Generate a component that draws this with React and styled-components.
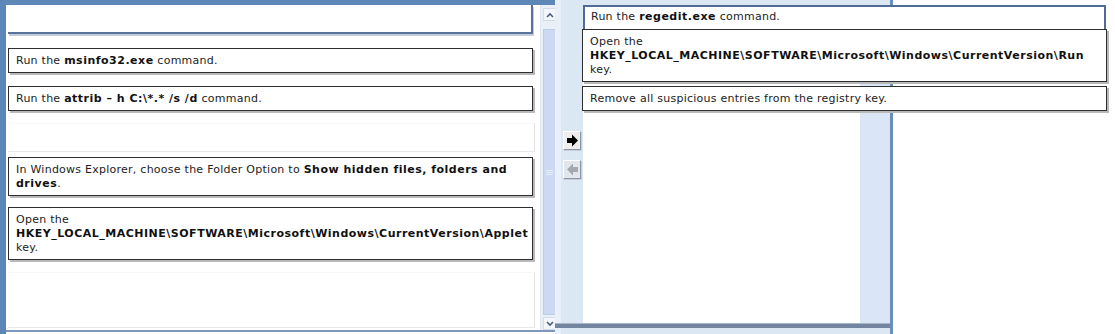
import React from "react";
import styled, { createGlobalStyle } from "styled-components";

const Global = createGlobalStyle`
  html, body { margin: 0; padding: 0; background: #ffffff; }
  body { font-family: "DejaVu Sans", Verdana, sans-serif; }
`;

const Screen = styled.div`
  width: 1115px;
  height: 334px;
  display: flex;
  overflow: hidden;
  background: #ffffff;
  font-family: "DejaVu Sans", Verdana, sans-serif;
  font-size: 11px;
  letter-spacing: 0.25px;
  color: #222;
`;

const LeftPanel = styled.div`
  width: 555px;
  height: 334px;
  flex: none;
  box-sizing: border-box;
  border-left: 6px solid #5c87b6;
  border-top: 5px solid #5c87b6;
  display: flex;
  background: #ffffff;
`;

const LeftBody = styled.div`
  display: flex;
  flex: 1;
  height: 327px;
  border-bottom: 2px solid #7f98ba;
  box-sizing: border-box;
`;

const List = styled.div`
  width: 532px;
  flex: none;
  display: flex;
  flex-direction: column;
  padding-left: 2px;
  overflow: hidden;
`;

const Item = styled.div`
  width: 525px;
  box-sizing: border-box;
  margin-top: ${(p) => p.$mt || 0}px;
  border: 1px solid #2e2e2e;
  padding: 5px 7px 4px 7px;
  line-height: 14px;
  background: #ffffff;
  box-shadow: 2px 2px 0 #b9b9b9;
  white-space: nowrap;
  b { font-weight: bold; color: #111; letter-spacing: 0.5px; }
`;

const ClippedItem = styled.div`
  width: 525px;
  height: 29px;
  box-sizing: border-box;
  border-right: 2px solid #58729b;
  border-bottom: 2px solid #58729b;
  box-shadow: 1px 2px 0 #c3cbd8;
  background: #fff;
`;

const Slot = styled.div`
  width: 527px;
  height: ${(p) => p.$h}px;
  box-sizing: border-box;
  margin-top: ${(p) => p.$mt || 0}px;
  border-right: 1px solid #e4e4e4;
  border-bottom: 1px solid #e8e8e8;
  border-top: 1px dotted #f0f0f0;
`;

const Scrollbar = styled.div`
  width: 17px;
  flex: none;
  display: flex;
  flex-direction: column;
  align-items: center;
  background: #eaf0f8;
  border-left: 1px solid #dfe6f1;
`;

const ScrollBtn = styled.div`
  width: 14px;
  height: 13px;
  margin-top: ${(p) => p.$mt || 0}px;
  display: flex;
  align-items: center;
  justify-content: center;
  background: #f3f6fb;
  border: 1px solid #d3dbe8;
  box-sizing: border-box;
  flex: none;
`;

const Thumb = styled.div`
  width: 14px;
  flex: 1;
  margin: 8px 0 2px 0;
  box-sizing: border-box;
  background: #cbdaf2;
  border: 1px solid #bccdea;
  display: flex;
  align-items: center;
  justify-content: center;
`;

const Grip = styled.div`
  width: 7px;
  height: 5px;
  background: repeating-linear-gradient(#e8eef9 0 1px, transparent 1px 2px);
`;

const Middle = styled.div`
  width: 28px;
  flex: none;
  height: 334px;
  background: #dce7f4;
  border-left: 6px solid #e9f0f9;
  box-sizing: border-box;
  display: flex;
  flex-direction: column;
  align-items: center;
  padding-top: 131px;
  gap: 10px;
`;

const MoveBtn = styled.div`
  width: 18px;
  height: 19px;
  box-sizing: border-box;
  background: ${(p) => (p.$disabled ? "#e2e7ee" : "#eeeeee")};
  border: 1px solid;
  border-color: #ffffff #8e97a3 #8e97a3 #ffffff;
  box-shadow: 1px 1px 0 #c4cedb;
  display: flex;
  align-items: center;
  justify-content: center;
`;

const RightArea = styled.div`
  width: 310px;
  flex: none;
  height: 334px;
  display: flex;
  flex-direction: column;
  background: #dce7f4;
  border-right: 3px solid #6a8fbd;
  box-sizing: border-box;
  padding-top: 5px;
`;

const RightMain = styled.div`
  flex: none;
  height: 318px;
  display: flex;
`;

const Drop = styled.div`
  width: 277px;
  flex: none;
  background: #ffffff;
  display: flex;
  flex-direction: column;
`;

const Gutter = styled.div`
  flex: 1;
  background: #dae6f5;
`;

const BottomBar = styled.div`
  height: 4px;
  margin-left: -28px;
  background: #74869f;
  border-top: 1px solid #a8b6c8;
`;

const RightItem = styled(Item)`
  position: relative;
  z-index: 2;
  margin-left: ${(p) => p.$ml || 0}px;
  flex: none;
`;

const SelectedItem = styled.div`
  width: 523px;
  height: 24px;
  flex: none;
  box-sizing: border-box;
  border: 2px solid #4f6b96;
  border-bottom: none;
  padding: 3px 6px;
  line-height: 14px;
  background: #ffffff;
  position: relative;
  z-index: 1;
  white-space: nowrap;
  b { font-weight: bold; color: #111; letter-spacing: 0.5px; }
`;

const Rest = styled.div`
  flex: 1;
  background: #ffffff;
`;

const ArrowRight = ({ color }) => (
  <svg width="13" height="13" viewBox="0 0 13 13">
    <path d="M1 4 H6 V0.5 L12 6.5 L6 12.5 V9 H1 Z" fill={color} />
  </svg>
);

const ArrowLeft = ({ color }) => (
  <svg width="13" height="13" viewBox="0 0 13 13">
    <path d="M12 4 H7 V0.5 L1 6.5 L7 12.5 V9 H12 Z" fill={color} />
  </svg>
);

const Chevron = ({ up }) => (
  <svg width="8" height="6" viewBox="0 0 8 6">
    <path
      d={up ? "M1 5 L4 2 L7 5" : "M1 1 L4 4 L7 1"}
      stroke="#4d5f7c"
      strokeWidth="1.6"
      fill="none"
    />
  </svg>
);

export default function App() {
  return (
    <>
      <Global />
      <Screen>
        <LeftPanel>
          <LeftBody>
            <List>
              <ClippedItem />
              <Item $mt={14}>
                Run the <b>msinfo32.exe</b> command.
              </Item>
              <Item $mt={13}>
                Run the <b>attrib – h C:\*.* /s /d</b> command.
              </Item>
              <Slot $h={29} $mt={12} />
              <Item $mt={5}>
                In Windows Explorer, choose the Folder Option to{" "}
                <b>Show hidden files, folders and</b>
                <br />
                <b>drives</b>.
              </Item>
              <Item $mt={11}>
                Open the
                <br />
                <b>HKEY_LOCAL_MACHINE\SOFTWARE\Microsoft\Windows\CurrentVersion\Applet</b>
                <br />
                key.
              </Item>
              <Slot $h={56} $mt={12} />
            </List>
            <Scrollbar>
              <ScrollBtn $mt={3}>
                <Chevron up />
              </ScrollBtn>
              <Thumb>
                <Grip />
              </Thumb>
              <ScrollBtn>
                <Chevron />
              </ScrollBtn>
            </Scrollbar>
          </LeftBody>
        </LeftPanel>
        <Middle>
          <MoveBtn>
            <ArrowRight color="#000000" />
          </MoveBtn>
          <MoveBtn $disabled>
            <ArrowLeft color="#a3a9b0" />
          </MoveBtn>
        </Middle>
        <RightArea>
          <RightMain>
            <Drop>
              <SelectedItem>
                Run the <b>regedit.exe</b> command.
              </SelectedItem>
              <RightItem $ml={-1}>
                Open the
                <br />
                <b>HKEY_LOCAL_MACHINE\SOFTWARE\Microsoft\Windows\CurrentVersion\Run</b>
                <br />
                key.
              </RightItem>
              <RightItem $ml={-1} $mt={4}>
                Remove all suspicious entries from the registry key.
              </RightItem>
              <Rest />
            </Drop>
            <Gutter />
          </RightMain>
          <BottomBar />
        </RightArea>
      </Screen>
    </>
  );
}
